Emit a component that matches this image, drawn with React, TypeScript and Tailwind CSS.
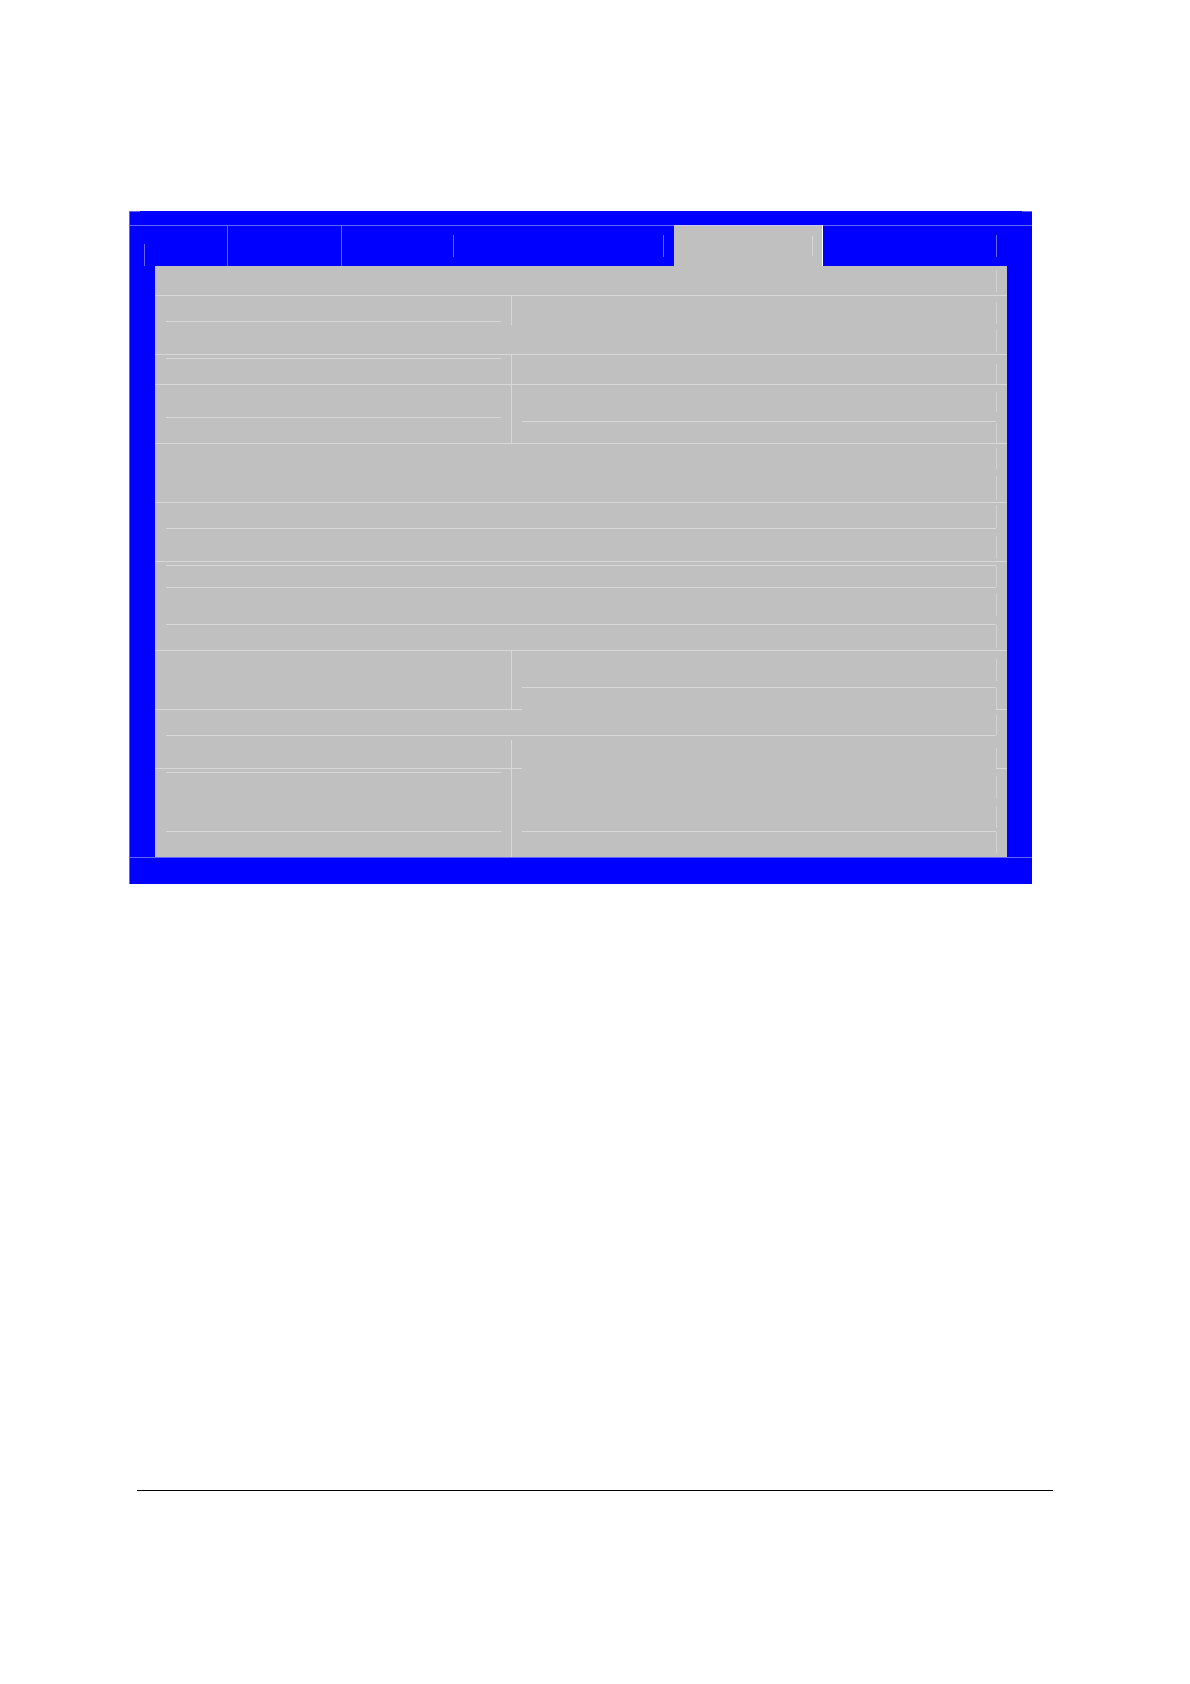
import clsx from "clsx";

type Row = {
  // full-width strips above the split part of the row
  wide?: string[];
  left?: string[];
  right?: string[];
  divider?: string;
  edge: string[];
  height: string;
  open?: boolean;
};

const rows: Row[] = [
  { height: "h-[30px]", edge: ["mt-1 h-[22px]"] },
  {
    height: "h-[59px]",
    left: ["h-[26px]"],
    divider: "h-[29px]",
    edge: ["mt-[6px] h-[22px]", "mt-[6px] h-[22px]"],
  },
  {
    height: "h-[30px]",
    left: ["h-1"],
    divider: "h-full",
    edge: ["mt-[9px] h-[20px]"],
  },
  {
    height: "h-[59px]",
    left: ["h-[33px]"],
    right: ["h-[37px]"],
    divider: "h-full",
    edge: ["mt-[7px] h-[20px]", "mt-[11px] h-[20px]"],
  },
  { height: "h-[59px]", edge: ["mt-1 h-[21px]", "mt-[7px] h-6"] },
  {
    height: "h-[59px]",
    wide: ["h-[26px]"],
    edge: ["mt-[2px] h-[23px]", "mt-[8px] h-[22px]"],
  },
  {
    height: "h-[89px]",
    wide: ["h-1", "h-[22px]", "h-[37px]"],
    edge: ["mt-1 h-[21px]", "mt-[7px] h-[22px]", "mt-[9px] h-[23px]"],
  },
  {
    height: "h-[59px]",
    right: ["h-[37px]"],
    divider: "h-full",
    edge: ["mt-[8px] h-[22px]", "mt-[7px] h-[21px]"],
    open: true,
  },
  {
    height: "h-[59px]",
    wide: ["h-[26px]"],
    divider: "mt-1 h-[29px]",
    edge: ["mt-[5px] h-[20px]", "mt-[13px] h-[20px]"],
    open: true,
  },
  {
    height: "h-[88px]",
    left: ["h-1", "h-[59px]"],
    right: ["h-[63px]"],
    divider: "h-full",
    edge: ["mt-[7px] h-[22px]", "mt-[8px] h-[22px]", "mt-1 h-[21px]"],
  },
];

function Strips({ heights = [] }: { heights?: string[] }) {
  return (
    <>
      {heights.map((h, i) => (
        <div key={i} className={clsx("shrink-0 border-b border-[#d8d8d8]", h)} />
      ))}
    </>
  );
}

function GridRow({ row, last }: { row: Row; last: boolean }) {
  const rule = last ? "" : "border-b border-[#d8d8d8]";

  return (
    <div className={clsx("flex", row.height)}>
      <div className="flex min-w-0 flex-1 flex-col">
        <div className="pl-[11px]">
          <Strips heights={row.wide} />
        </div>
        <div className="flex min-h-0 flex-1">
          <div className={clsx("flex w-[367px] shrink-0", rule)}>
            <div className="mr-[10px] flex-1 pl-[11px]">
              <Strips heights={row.left} />
            </div>
            <div className="w-[11px]">
              {row.divider && (
                <div className={clsx("border-l border-[#d8d8d8]", row.divider)} />
              )}
            </div>
          </div>
          <div className={clsx("flex-1", !row.open && rule)}>
            <Strips heights={row.right} />
          </div>
        </div>
      </div>
      <div className={clsx("w-[11px]", rule)}>
        {row.edge.map((e, i) => (
          <div key={i} className={clsx("border-l border-[#d2d2d2]", e)} />
        ))}
      </div>
    </div>
  );
}

function TabBar() {
  const cell = "flex border-t border-[#6464ff]";
  const tick = "mt-[9px] h-[22px] border-r border-[#6464ff]";

  return (
    <div className="flex h-[41px]">
      <div className={clsx(cell, "w-[98px] items-end border-r pl-[14px]")}>
        <div className="h-[22px] border-l border-[#6464ff]" />
      </div>
      <div className={clsx(cell, "w-[114px] border-r")} />
      <div className={clsx(cell, "w-[112px] justify-end")}>
        <div className={tick} />
      </div>
      <div className={clsx(cell, "w-[220px] justify-end pr-[10px]")}>
        <div className={tick} />
      </div>
      <div className="flex w-[149px] justify-end border-t border-r border-t-[#c8c8f0] border-r-white bg-[#c0c0c0] pr-[9px]">
        <div className="mt-[10px] h-[20px] border-r border-[#d8d8d8]" />
      </div>
      <div className={clsx(cell, "flex-1 justify-end pr-[35px]")}>
        <div className={tick} />
      </div>
    </div>
  );
}

export default function App() {
  return (
    <main className="min-h-screen bg-white pt-[211px]">
      <section className="mr-[158px] ml-[129px] border-l border-[#6464ff] bg-[#0000ff]">
        <div className="flex h-[14px] justify-between">
          <div className="w-[10px] border-t border-[#6464ff]" />
          <div className="w-[10px] border-t border-[#6464ff]" />
        </div>
        <TabBar />
        <div className="mr-[25px] ml-[25px] bg-[#c0c0c0]">
          {rows.map((row, i) => (
            <GridRow key={i} row={row} last={i === rows.length - 1} />
          ))}
        </div>
        <div className="h-[27px] border-t border-[#6464ff]" />
      </section>
      <hr className="mt-[606px] mr-[137px] ml-[137px] border-t border-black" />
    </main>
  );
}
